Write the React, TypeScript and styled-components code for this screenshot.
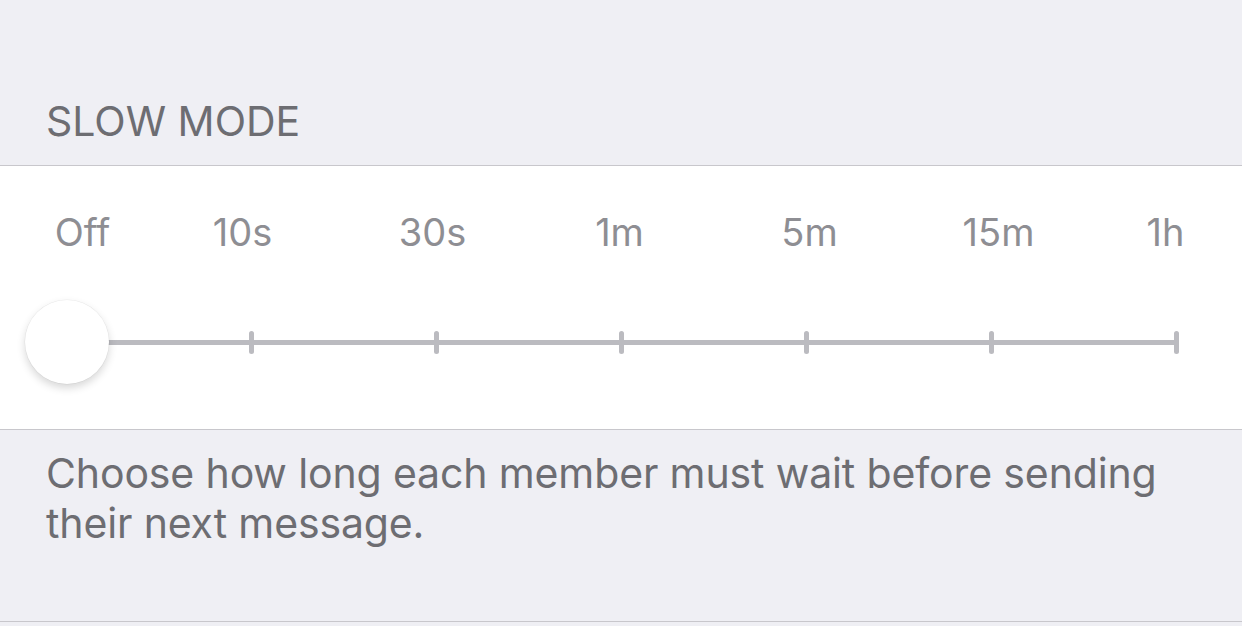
import React from 'react';
import styled, { createGlobalStyle } from 'styled-components';

const GlobalStyle = createGlobalStyle`
  html, body {
    margin: 0;
    padding: 0;
    background: #efeff4;
    font-family: Inter, "Noto Sans", sans-serif;
    -webkit-font-smoothing: antialiased;
  }
`;

const Screen = styled.main`
  width: 1242px;
  min-height: 626px;
  background: #efeff4;
`;

const SectionHeader = styled.header`
  box-sizing: border-box;
  height: 166px;
  display: flex;
  align-items: flex-end;
  padding: 0 46px 19px;
  border-bottom: 1px solid #c8c7cc;
  font-size: 41px;
  line-height: 50px;
  color: #6d6d72;
  text-transform: uppercase;
`;

const Panel = styled.section`
  box-sizing: border-box;
  background: #fff;
  padding: 43px 0 45px;
  border-bottom: 1px solid #c8c7cc;
`;

const LabelRow = styled.div`
  display: flex;
  justify-content: space-between;
  padding: 0 65.5px 0 66.5px;
  margin-bottom: 45px;
`;

const Label = styled.span<{ $nudge: number }>`
  width: 0;
  display: flex;
  justify-content: center;
  white-space: nowrap;
  font-size: 38px;
  line-height: 46px;
  color: #8e8e93;
  transform: translateX(${({ $nudge }) => $nudge}px);
`;

const SliderRow = styled.div`
  height: 84px;
  display: flex;
  align-items: center;
  padding: 0 63px 0 64px;
`;

const Track = styled.div`
  position: relative;
  flex: 1;
  height: 23px;
  display: flex;
  align-items: center;
  justify-content: space-between;

  &::before {
    content: '';
    position: absolute;
    left: 2px;
    right: 2px;
    top: 9px;
    height: 5px;
    background: #bbbbc0;
  }
`;

const Tick = styled.span`
  position: relative;
  width: 5px;
  height: 23px;
  border-radius: 2.5px;
  background: #bbbbc0;
`;

const Knob = styled.span<{ $index: number }>`
  position: absolute;
  top: -30.5px;
  left: calc(${({ $index }) => $index} * (100% - 5px) / 6 - 39.5px);
  width: 84px;
  height: 84px;
  border-radius: 50%;
  background: #fff;
  box-shadow: 0 4px 9px rgba(0, 0, 0, 0.16), 0 0 0 0.5px rgba(0, 0, 0, 0.06);
`;

const Footer = styled.footer`
  box-sizing: border-box;
  height: 192px;
  padding: 18px 46px 0;
  border-bottom: 1px solid #c8c7cc;
  font-size: 41px;
  line-height: 50px;
  letter-spacing: -0.13px;
  color: #6d6d72;
`;

const steps = [
  { label: 'Off', nudge: 16 },
  { label: '10s', nudge: -9 },
  { label: '30s', nudge: -4 },
  { label: '1m', nudge: -2 },
  { label: '5m', nudge: 3 },
  { label: '15m', nudge: 7 },
  { label: '1h', nudge: -11 },
];

export default function App() {
  const value = 0;

  return (
    <Screen>
      <GlobalStyle />
      <SectionHeader>Slow Mode</SectionHeader>
      <Panel>
        <LabelRow>
          {steps.map(s => (
            <Label key={s.label} $nudge={s.nudge}>{s.label}</Label>
          ))}
        </LabelRow>
        <SliderRow>
          <Track>
            {steps.map(s => <Tick key={s.label} />)}
            <Knob $index={value} />
          </Track>
        </SliderRow>
      </Panel>
      <Footer>
        Choose how long each member must wait before sending
        <br />
        their next message.
      </Footer>
    </Screen>
  );
}
